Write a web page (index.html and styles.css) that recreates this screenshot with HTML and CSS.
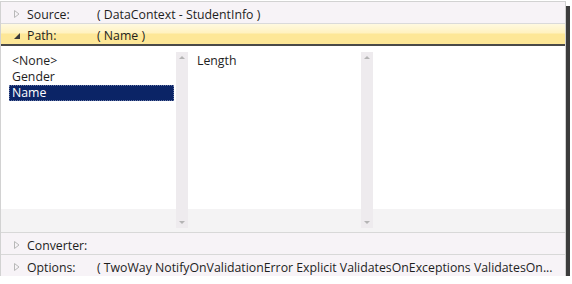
FILE: index.html
```html
<!DOCTYPE html>
<html lang="en">
<head>
    <meta charset="UTF-8">
    <link rel="stylesheet" href="styles.css">
    <title>Binding</title>
</head>
<body>
    <div class="frame">
        <div class="row">
            <svg class="arrow" width="8" height="10" viewBox="0 0 8 10"><path d="M1.5 1.5 L6 5 L1.5 8.5 Z" fill="none" stroke="#b8b8b8"/></svg>
            <span class="label">Source:</span>
            <span class="value">( DataContext - StudentInfo )</span>
        </div>
        <div class="row path">
            <svg class="arrow" width="8" height="10" viewBox="0 0 8 10"><path d="M7 2 L7 8 L1 8 Z" fill="#3a3a3a"/></svg>
            <span class="label">Path:</span>
            <span class="value">( Name )</span>
        </div>
        <div class="content">
            <div class="lists">
                <div class="list first">
                    <div class="item">&lt;None&gt;</div>
                    <div class="item">Gender</div>
                    <div class="item selected">Name</div>
                </div>
                <div class="scroll"><span class="up"></span><span class="down"></span></div>
                <div class="list second">
                    <div class="item">Length</div>
                </div>
                <div class="scroll"><span class="up"></span><span class="down"></span></div>
            </div>
        </div>
        <div class="row sep">
            <svg class="arrow" width="8" height="10" viewBox="0 0 8 10"><path d="M1.5 1.5 L6 5 L1.5 8.5 Z" fill="none" stroke="#b8b8b8"/></svg>
            <span class="label">Converter:</span>
        </div>
        <div class="row sep">
            <svg class="arrow" width="8" height="10" viewBox="0 0 8 10"><path d="M1.5 1.5 L6 5 L1.5 8.5 Z" fill="none" stroke="#b8b8b8"/></svg>
            <span class="label">Options:</span>
            <span class="value">( TwoWay NotifyOnValidationError Explicit ValidatesOnExceptions ValidatesOn...</span>
        </div>
    </div>
</body>
</html>
```

FILE: styles.css
```css
body {
    margin: 0;
    padding: 0;
    background-color: white;
    font-family: "Open Sans", "DejaVu Sans", sans-serif;
    font-size: 12.3px;
    color: #1e1e1e;
}

.frame {
    width: 564px;
    margin: 1px 0 0 0;
    border: 1px solid #d2d2d2;
    border-right: 1px solid #cfcfcf;
    border-bottom: none;
    background-color: #f7f3f7;
    box-shadow: 4px 5px 0 #3c3c3c;
}

.row {
    box-sizing: border-box;
    display: flex;
    align-items: center;
    height: 21px;
    padding-top: 3px;
    white-space: nowrap;
    overflow: hidden;
}

.row.sep {
    height: 22px;
    border-top: 1px solid #d8d8d8;
}

.row:first-child {
    height: 22px;
    border-bottom: 1px solid #dadada;
}

.arrow {
    margin-left: 12px;
    margin-right: 6px;
}

.label {
    width: 70px;
}

.path {
    height: 22px;
    background: linear-gradient(#fff9e0, #fff2c0 45%, #fde797 50%, #fde797);
    border-bottom: 2px solid #4a4a48;
}

.content {
    height: 186px;
    background: linear-gradient(white 163px, #f4f3f4 163px);
}

.lists {
    display: flex;
    padding: 6px 0 0 8px;
    gap: 2px;
}

.list {
    height: 160px;
}

.list.first {
    width: 165px;
    padding-top: 1px;
}

.list.second {
    width: 168px;
    padding-top: 1px;
    margin-left: 1px;
}

.item {
    height: 16px;
    line-height: 16px;
    padding-left: 3px;
}

.list.second .item {
    padding-left: 6px;
}

.item.selected {
    background-color: #0b2466;
    color: white;
    outline: 1px dotted #6a7aa6;
    outline-offset: -1px;
}

.scroll {
    position: relative;
    width: 12px;
    height: 176px;
    background-color: #eeebee;
}

.scroll .up,
.scroll .down {
    position: absolute;
    left: 3px;
    width: 0;
    height: 0;
    border-left: 3px solid transparent;
    border-right: 3px solid transparent;
}

.scroll .up {
    top: 4px;
    border-bottom: 3px solid #b4b4b4;
}

.scroll .down {
    bottom: 4px;
    border-top: 3px solid #b4b4b4;
}
```
